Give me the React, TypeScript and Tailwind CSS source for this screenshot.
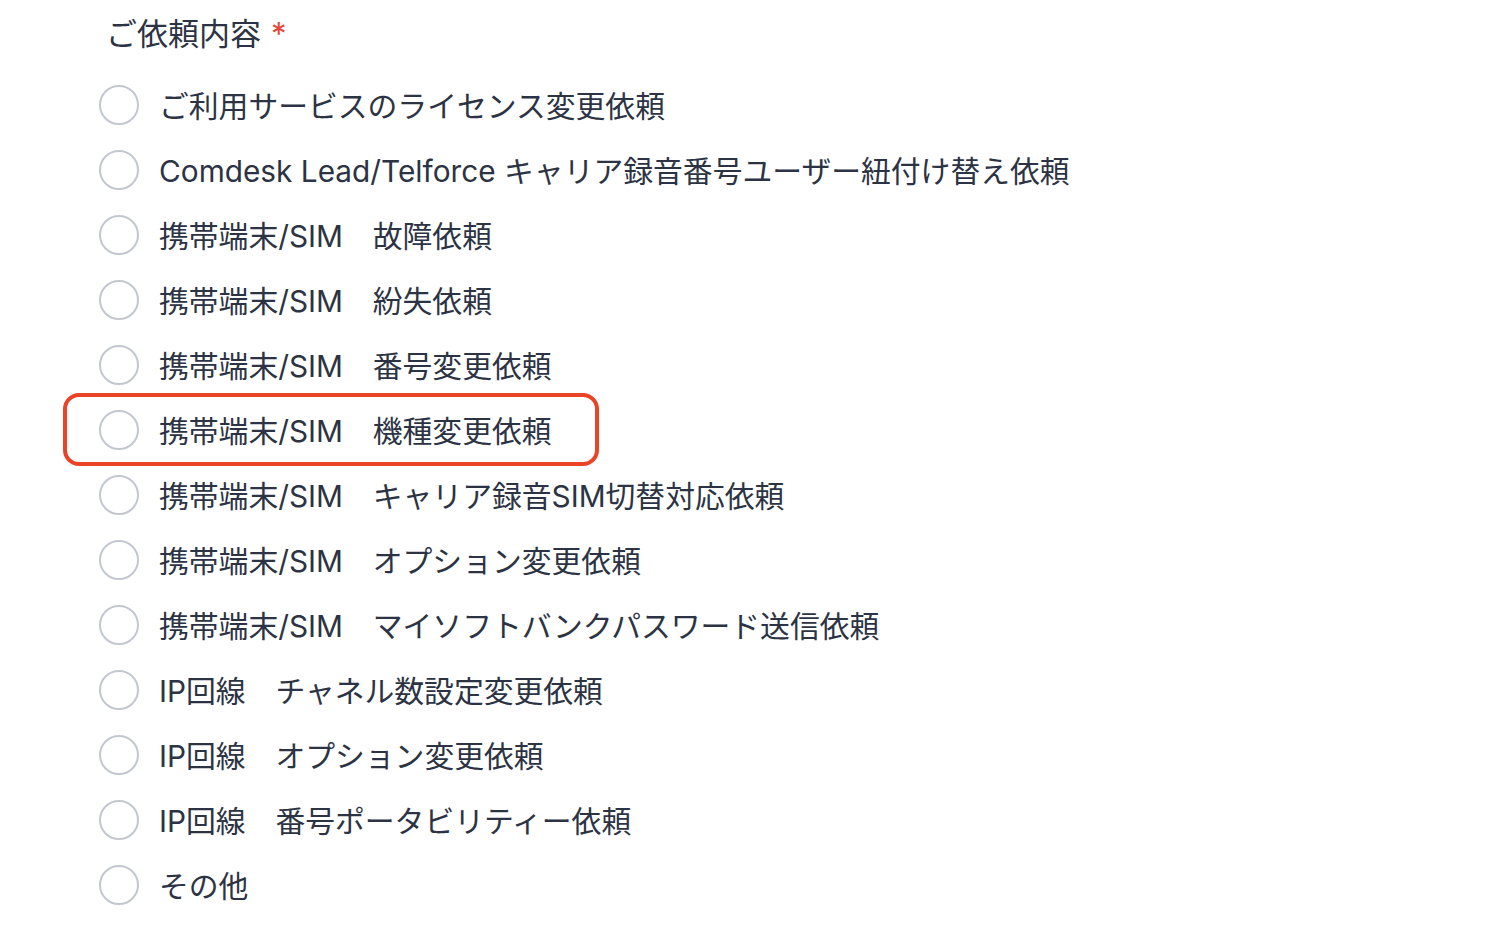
import React from "react";

const options = [
  "ご利用サービスのライセンス変更依頼",
  "Comdesk Lead/Telforce キャリア録音番号ユーザー紐付け替え依頼",
  "携帯端末/SIM　故障依頼",
  "携帯端末/SIM　紛失依頼",
  "携帯端末/SIM　番号変更依頼",
  "携帯端末/SIM　機種変更依頼",
  "携帯端末/SIM　キャリア録音SIM切替対応依頼",
  "携帯端末/SIM　オプション変更依頼",
  "携帯端末/SIM　マイソフトバンクパスワード送信依頼",
  "IP回線　チャネル数設定変更依頼",
  "IP回線　オプション変更依頼",
  "IP回線　番号ポータビリティー依頼",
  "その他",
];

export default function App() {
  return (
    <div
      className="w-[1494px] h-[928px] bg-white text-[#2c3344] overflow-hidden pt-[14px]"
      style={{ fontFamily: "Inter, 'Noto Sans CJK JP', sans-serif" }}
    >
      {/* 見出し */}
      <div className="pl-[106px] h-[40px] flex items-center text-[31px] leading-[40px]">
        <span>ご依頼内容</span>
        <span className="ml-[10px] text-[#e5483b]">*</span>
      </div>

      {/* 選択肢 */}
      <div className="pl-[99px] mt-[18px] flex flex-col">
        {options.map((label, i) => (
          <label key={i} className="relative h-[65px] flex items-center gap-[20px] cursor-pointer">
            {i === 5 && (
              <span className="absolute left-[-36px] top-[-4px] w-[536px] h-[73px] border-4 border-[#ea4325] rounded-[16px] pointer-events-none" />
            )}
            <span className="w-[40px] h-[40px] rounded-full border-2 border-[#c3c7d0] bg-white shrink-0" />
            <span className="text-[29.8px] leading-[40px] pt-[2px] whitespace-pre">{label}</span>
          </label>
        ))}
      </div>
    </div>
  );
}
